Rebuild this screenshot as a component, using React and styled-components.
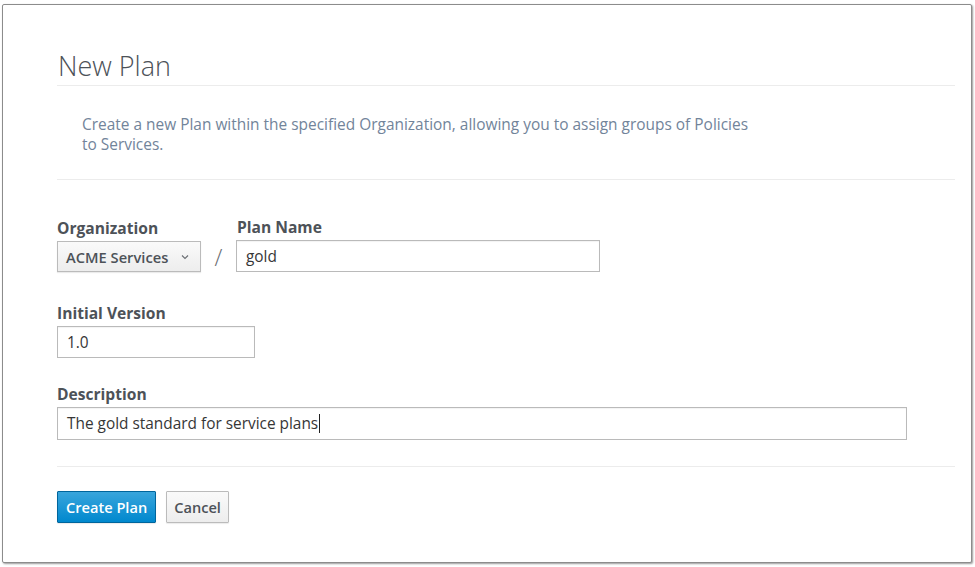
import React from 'react';
import styled, { createGlobalStyle } from 'styled-components';

const GlobalStyle = createGlobalStyle`
    html, body {
        margin: 0;
        padding: 0;
        background: #ffffff;
    }
    body {
        font-family: 'Open Sans', 'Noto Sans', sans-serif;
        color: #363636;
    }
`;

const Page = styled.div`
    padding: 4px 3px 4px 2px;
`;

const Card = styled.div`
    height: 559px;
    box-sizing: border-box;
    border: 1px solid #8c8c8c;
    border-radius: 2px;
    box-shadow: 1px 1px 2px rgba(0, 0, 0, 0.4);
    background: #fff;
    padding: 43px 16px 0 54px;
`;

const Title = styled.h1`
    margin: 0;
    padding: 0 0 0 1px;
    font-size: 27px;
    font-weight: 300;
    line-height: 36px;
    color: #4d5258;
`;

const Rule = styled.hr`
    border: none;
    border-top: 1px solid #ececec;
    margin: ${p => p.$top || 0}px 0 ${p => p.$bottom || 0}px;
`;

const Intro = styled.p`
    margin: 0;
    padding: 28px 0 25px 25px;
    max-width: 672px;
    font-size: 15.45px;
    line-height: 20px;
    color: #72849a;
`;

const Row = styled.div`
    display: flex;
    align-items: flex-end;
    margin-bottom: ${p => p.$bottom || 0}px;
`;

const Group = styled.div`
    display: flex;
    flex-direction: column;
`;

const Label = styled.label`
    font-size: 15.6px;
    font-weight: 700;
    color: #4d5258;
    line-height: 20px;
    margin: 0 0 3px ${p => p.$indent || 0}px;
`;

const Field = styled.div`
    box-sizing: border-box;
    width: ${p => p.$width}px;
    height: ${p => p.$height || 32}px;
    border: 1px solid #bababa;
    box-shadow: inset 0 1px 1px rgba(3, 3, 3, 0.05);
    display: flex;
    align-items: center;
    padding: 0 9px;
    font-size: 15.4px;
    color: #363636;
    background: #fff;
`;

const Caret = styled.span`
    display: inline-block;
    width: 1px;
    height: 19px;
    background: #222;
    margin-left: 1px;
`;

const Select = styled.div`
    box-sizing: border-box;
    width: 144px;
    height: 31px;
    border: 1px solid #bbbbbb;
    background: linear-gradient(#fafafa, #ededed);
    box-shadow: 0 1px 1px rgba(0, 0, 0, 0.08);
    display: flex;
    align-items: center;
    justify-content: space-between;
    padding: 0 11px 0 8px;
    font-size: 14.7px;
    font-weight: 600;
    color: #4d5258;
`;

const Slash = styled.span`
    font-size: 23px;
    font-weight: 300;
    color: #6a6e73;
    width: 35px;
    text-align: center;
    line-height: 30px;
`;

const Buttons = styled.div`
    display: flex;
    gap: 10px;
    padding-top: 24px;
`;

const Button = styled.button`
    box-sizing: border-box;
    height: 32px;
    padding: 0 ${p => (p.$primary ? 8 : 7)}px;
    font-family: 'Open Sans', 'Noto Sans', sans-serif;
    font-size: 14.6px;
    font-weight: 600;
    border-radius: 1px;
    border: 1px solid ${p => (p.$primary ? '#00659c' : '#bbbbbb')};
    color: ${p => (p.$primary ? '#ffffff' : '#4d5258')};
    background: ${p => (p.$primary ? 'linear-gradient(#39a5dc, #0088ce)' : 'linear-gradient(#fafafa, #ededed)')};
    box-shadow: 0 1px 1px rgba(0, 0, 0, 0.08);
`;

const Chevron = () => (
    <svg width="8" height="6" viewBox="0 0 8 6">
        <path d="M1 1.5 L4 4.5 L7 1.5" fill="none" stroke="#6a6e73" strokeWidth="1.1" />
    </svg>
);

export default function App() {
    return (
        <Page>
            <GlobalStyle />
            <Card>
                <Title>New Plan</Title>
                <Rule $top={1} />
                <Intro>
                    Create a new Plan within the specified Organization, allowing you to assign groups of Policies
                    to Services.
                </Intro>
                <Rule $bottom={37} />

                <Row $bottom={31}>
                    <Group>
                        <Label>Organization</Label>
                        <Select>
                            ACME Services
                            <Chevron />
                        </Select>
                    </Group>
                    <Slash>/</Slash>
                    <Group>
                        <Label $indent={1}>Plan Name</Label>
                        <Field $width={364}>gold</Field>
                    </Group>
                </Row>

                <Row $bottom={26}>
                    <Group>
                        <Label>Initial Version</Label>
                        <Field $width={198}>1.0</Field>
                    </Group>
                </Row>

                <Row>
                    <Group>
                        <Label>Description</Label>
                        <Field $width={850} $height={33}>
                            The gold standard for service plans
                            <Caret />
                        </Field>
                    </Group>
                </Row>

                <Rule $top={26} />
                <Buttons>
                    <Button $primary>Create Plan</Button>
                    <Button>Cancel</Button>
                </Buttons>
            </Card>
        </Page>
    );
}
